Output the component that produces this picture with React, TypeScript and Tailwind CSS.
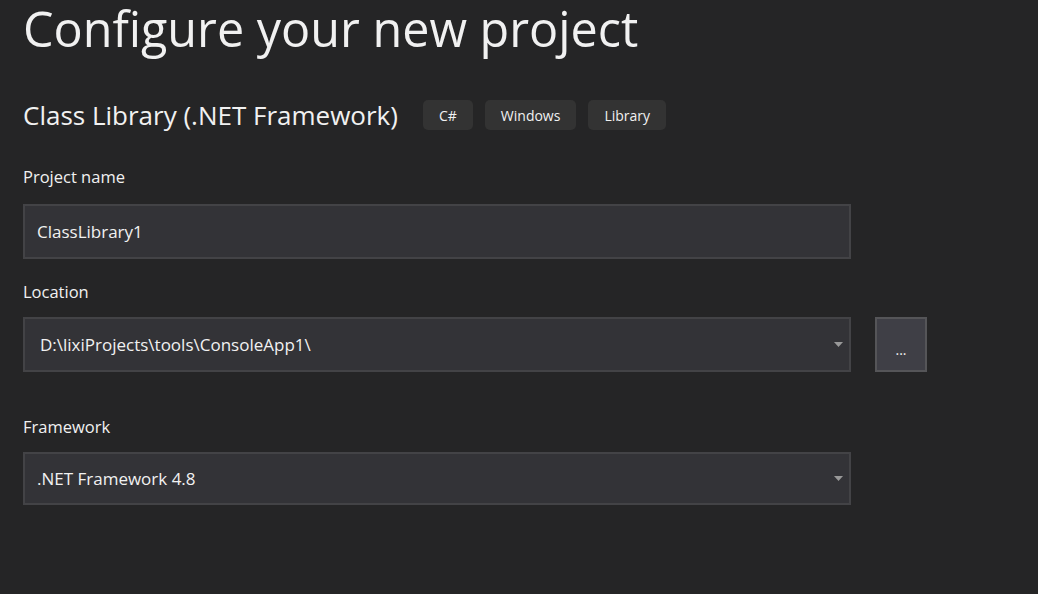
const font = { fontFamily: "'Segoe UI', 'Open Sans', 'Noto Sans', sans-serif" };

const Tag = ({ text }: { text: string }) => (
  <span className="h-[30px] px-[16px] flex items-center rounded-[5px] bg-[#333333] text-[14px] text-[#f1f1f1]">
    {text}
  </span>
);

const Caret = () => (
  <svg width="9" height="5" viewBox="0 0 9 5" className="shrink-0">
    <path d="M0 0h9L4.5 5z" fill="#999999" />
  </svg>
);

const Field = ({ value, dropdown, className = "" }: { value: string; dropdown?: boolean; className?: string }) => (
  <div
    className={`w-[828px] flex items-center justify-between border-2 border-[#434346] bg-[#333337] pr-[6px] text-[17px] text-[#f1f1f1] ${className}`}
  >
    <span>{value}</span>
    {dropdown && <Caret />}
  </div>
);

export default function App() {
  return (
    <div style={font} className="w-[1038px] h-[594px] overflow-hidden bg-[#252526] pl-[23px] text-[#f1f1f1]">
      <h1 className="text-[48.5px] leading-[56px] font-normal">Configure your new project</h1>

      <div className="flex items-center gap-[12px] mt-[43px]">
        <h2 className="text-[26px] leading-[32px] mr-[13px]">Class Library (.NET Framework)</h2>
        <Tag text="C#" />
        <Tag text="Windows" />
        <Tag text="Library" />
      </div>

      <div className="mt-[35px] text-[16.5px] leading-[22px]">Project name</div>
      <Field value="ClassLibrary1" className="mt-[16px] h-[55px] pl-[12px]" />

      <div className="mt-[22px] text-[16.5px] leading-[22px]">Location</div>
      <div className="mt-[14px] flex items-center gap-[24px]">
        <Field value="D:\lixiProjects\tools\ConsoleApp1\" dropdown className="h-[55px] pl-[15px]" />
        <button className="w-[52px] h-[55px] border-2 border-[#555558] bg-[#3f3f46] text-[14px] text-[#f1f1f1] flex items-center justify-center leading-none">
          <span className="translate-y-[5px]">...</span>
        </button>
      </div>

      <div className="mt-[44px] text-[16.5px] leading-[22px]">Framework</div>
      <Field value=".NET Framework 4.8" dropdown className="mt-[14px] h-[53px] pl-[12px]" />
    </div>
  );
}
